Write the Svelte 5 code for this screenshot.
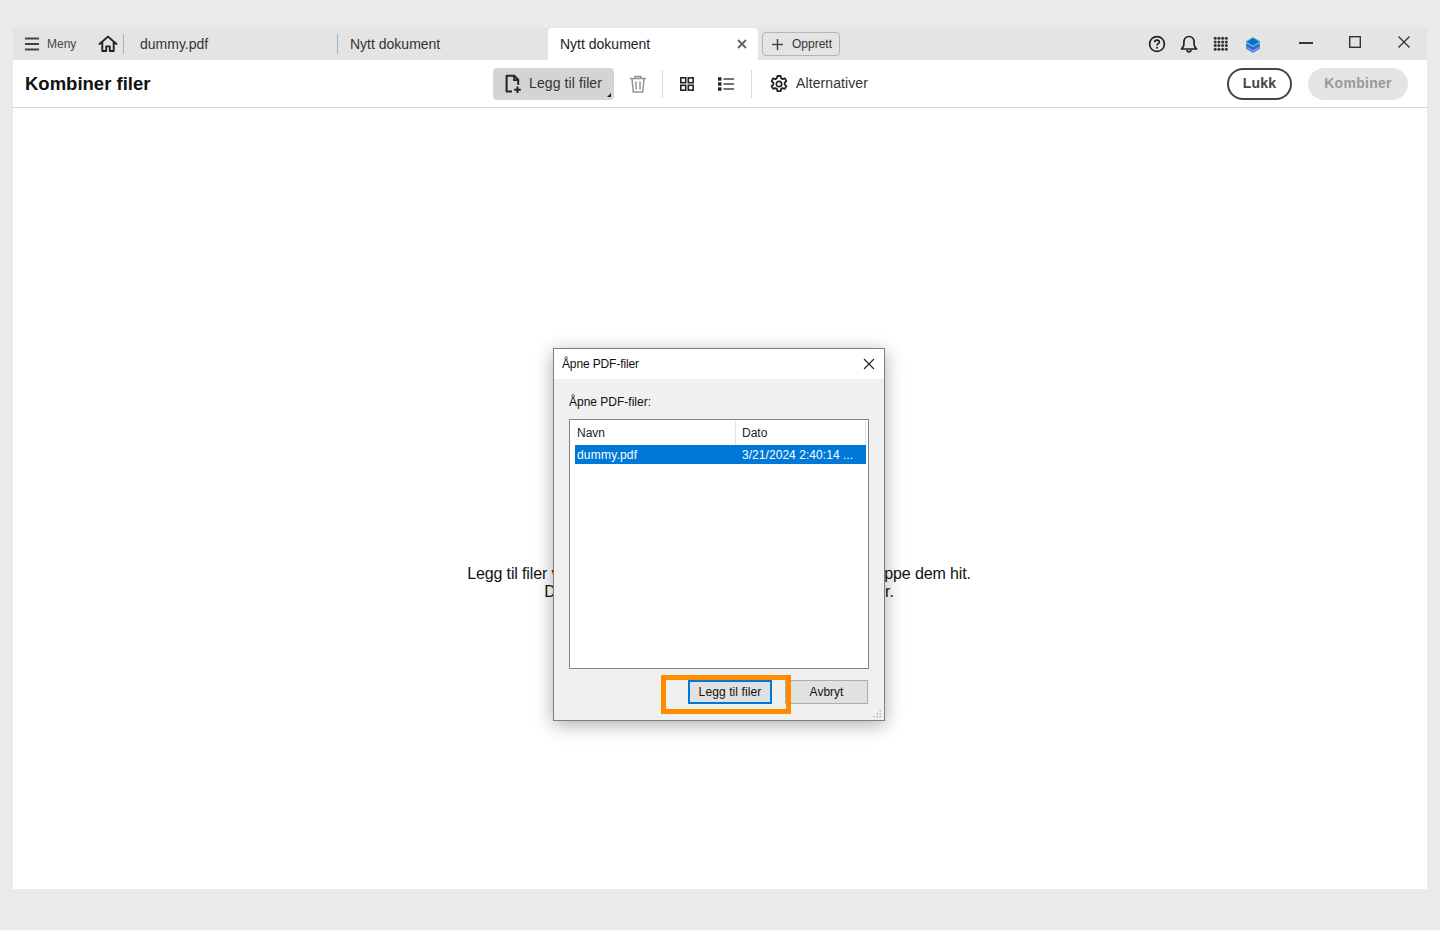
<script>
  const tabs = [
    { name: 'dummy.pdf', w: 214 },
    { name: 'Nytt dokument', w: 211 }
  ];
  const dots = [2.2, 5.9, 9.6, 13.3];
</script>

<div class="page">
  <div class="window">
    <header class="tabbar">
      <button class="menu">
        <svg width="16" height="14" viewBox="0 0 16 14"><path d="M1 1.500h14M1 7h14M1 12.500h14" stroke="#444" stroke-width="2" fill="none"/></svg>
        <span>Meny</span>
      </button>
      <button class="home" aria-label="Hjem">
        <svg width="20" height="18" viewBox="0 0 20 18"><path d="M1.500 9 10 1.600 18.500 9M4.300 7v9h3.900v-4.600h3.600V16h3.900V7" fill="none" stroke="#222" stroke-width="1.900" stroke-linejoin="round" stroke-linecap="round"/></svg>
      </button>
      {#each tabs as t}
        <div class="tab" style="width:{t.w}px">{t.name}</div>
      {/each}
      <div class="tab active">
        <span>Nytt dokument</span>
        <svg width="10" height="10" viewBox="0 0 10 10"><path d="M1 1l8 8M9 1l-8 8" stroke="#666" stroke-width="1.900"/></svg>
      </div>
      <button class="create">
        <svg width="11" height="11" viewBox="0 0 11 11"><path d="M5.500 0v11M0 5.500h11" stroke="#444" stroke-width="1.500"/></svg>
        <span>Opprett</span>
      </button>
      <div class="spacer"></div>
      <div class="status">
        <svg width="18" height="18" viewBox="0 0 18 18"><circle cx="9" cy="9" r="7.400" fill="none" stroke="#222" stroke-width="1.700"/><path d="M6.700 7.200c0-1.300 1-2 2.300-2s2.300.7 2.300 1.900c0 1.600-2.300 1.500-2.300 3.300" fill="none" stroke="#222" stroke-width="1.700"/><circle cx="9" cy="12.800" r="1" fill="#222"/></svg>
        <svg width="18" height="18" viewBox="0 0 18 18"><path d="M1.500 14h15c-1.600-1.300-2.400-2.600-2.400-4.700V7.200C14.100 4 12 1.500 9 1.500S3.900 4 3.900 7.200v2.100C3.900 11.400 3.100 12.700 1.500 14z" fill="none" stroke="#222" stroke-width="1.700" stroke-linejoin="round"/><path d="M6.800 15c.3 1.100 1.100 1.900 2.200 1.900s1.900-.8 2.200-1.900" fill="none" stroke="#222" stroke-width="1.700"/></svg>
        <svg class="dots" width="16" height="16" viewBox="0 0 16 16" fill="#333">
          {#each dots as y}
            {#each dots as x}
              <circle cx={x} cy={y} r="1.500"/>
            {/each}
          {/each}
        </svg>
        <svg class="logo" width="16" height="18" viewBox="0 0 16 18"><path d="M8 1l7 4v8l-7 4-7-4V5z" fill="#4fd0a0"/><path d="M8 2l6.500 3.800L8 9.500 1.500 5.800z" fill="#1266e0"/><path d="M1.500 7.500 8 11l6.500-3.500v5L8 16.500l-6.500-4z" fill="#2a62e8"/><path d="M2 11.500 8 15l6-3.500" fill="none" stroke="#8f8df0" stroke-width="1.500"/></svg>
      </div>
      <div class="winctl">
        <svg class="min" width="14" height="14" viewBox="0 0 14 14"><path d="M0 8h14" stroke="#222" stroke-width="1.800"/></svg>
        <svg width="12" height="12" viewBox="0 0 12 12"><rect x=".7" y=".7" width="10.600" height="10.600" fill="none" stroke="#333" stroke-width="1.400"/></svg>
        <svg width="12" height="12" viewBox="0 0 12 12"><path d="M.5.500l11 11M11.500.5l-11 11" stroke="#333" stroke-width="1.400"/></svg>
      </div>
    </header>

    <div class="toolbar">
      <h1>Kombiner filer</h1>
      <div class="tools">
        <button class="add">
          <svg width="20" height="20" viewBox="0 0 20 20"><path d="M9 17.500H3.600V1.800h7.600l4 4v5" fill="none" stroke="#222" stroke-width="2" stroke-linejoin="round"/><path d="M11 2v4.200h4.200" fill="none" stroke="#222" stroke-width="1.700"/><path d="M14.500 12.500v6.500M11.200 15.800h6.600" stroke="#222" stroke-width="2"/></svg>
          <span class="lbl">Legg til filer</span>
          <i class="corner"></i>
        </button>
        <svg class="trash" width="18" height="18" viewBox="0 0 18 18"><path d="M1 3.500h16M6 3.500V1.500h6v2M3 3.500l1.300 13.500h9.400L15 3.500M7 6.500v8M11 6.500v8" fill="none" stroke="#959595" stroke-width="1.500"/></svg>
        <div class="sep"></div>
        <svg class="grid" width="14" height="14" viewBox="0 0 14 14"><g fill="none" stroke="#222" stroke-width="1.600"><rect x=".8" y=".8" width="4.900" height="4.900"/><rect x="8.300" y=".8" width="4.900" height="4.900"/><rect x=".8" y="8.300" width="4.900" height="4.900"/><rect x="8.300" y="8.300" width="4.900" height="4.900"/></g></svg>
        <svg class="list" width="16" height="14" viewBox="0 0 16 14"><path d="M5.500 2h10.500M5.500 7h10.500M5.500 12h10.500" stroke="#444" stroke-width="1.600"/><g fill="#222"><rect x="0" y=".3" width="3.500" height="3.400"/><rect x="0" y="5.300" width="3.500" height="3.400"/><rect x="0" y="10.300" width="3.500" height="3.400"/></g></svg>
        <div class="sep s2"></div>
        <svg class="gear" width="18" height="18" viewBox="0 0 18 18"><path d="M7.400 1h3.200l.5 2.300 1.500.8 2.200-.8 1.600 2.800-1.700 1.600v1.800l1.700 1.600-1.600 2.800-2.200-.8-1.500.8-.5 2.300H7.400l-.5-2.300-1.500-.8-2.200.8-1.600-2.800 1.700-1.600V7.700L1.600 6.100l1.600-2.800 2.200.8 1.500-.8z" fill="none" stroke="#222" stroke-width="1.800" stroke-linejoin="round"/><circle cx="9" cy="9" r="2.700" fill="none" stroke="#222" stroke-width="1.700"/></svg>
        <span class="opt lbl">Alternativer</span>
      </div>
      <div class="actions">
        <button class="close">Lukk</button>
        <button class="combine">Kombiner</button>
      </div>
    </div>

    <main class="content">
      <p>Legg til filer ved å klikke på Legg til filer eller ved å dra og slippe dem hit.<br/>Du kan kombinere PDF-er og rapporter fra Kontor.</p>

      <section class="dialog">
        <div class="dtitle">
          <span>Åpne PDF-filer</span>
          <svg width="12" height="12" viewBox="0 0 12 12"><path d="M1 1l10 10M11 1L1 11" stroke="#222" stroke-width="1.100"/></svg>
        </div>
        <div class="dbody">
          <label for="files">Åpne PDF-filer:</label>
          <div class="listbox" id="files">
            <div class="head"><span class="c1">Navn</span><span class="c2">Dato</span></div>
            <div class="row"><span class="c1">dummy.pdf</span><span class="c2">3/21/2024 2:40:14 ...</span></div>
          </div>
          <div class="dbtns">
            <div class="hl">
              <button class="primary">Legg til filer</button>
            </div>
            <button class="cancel">Avbryt</button>
          </div>
        </div>
        <svg class="grip" width="9" height="9" viewBox="0 0 9 9" fill="#b4b4b4"><rect x="6.500" y="0" width="1.500" height="1.500"/><rect x="3.500" y="3" width="1.500" height="1.500"/><rect x="6.500" y="3" width="1.500" height="1.500"/><rect x="0.500" y="6" width="1.500" height="1.500"/><rect x="3.500" y="6" width="1.500" height="1.500"/><rect x="6.500" y="6" width="1.500" height="1.500"/></svg>
      </section>
    </main>
  </div>
</div>

<style>
  :global(body) {
    margin: 0;
    background: #eaeaea;
    font-family: "Liberation Sans", Arial, sans-serif;
  }
  button {
    font-family: inherit;
    border: 0;
    background: none;
    padding: 0;
  }
  .page {
    height: 930px;
    box-sizing: border-box;
    padding: 28px 13px 41px 13px;
  }
  .window {
    height: 861px;
    background: #fff;
    display: flex;
    flex-direction: column;
  }
  .tabbar {
    height: 32px;
    flex: none;
    background: #e4e4e4;
    display: flex;
    align-items: center;
    color: #333;
  }
  .menu {
    display: flex;
    align-items: center;
    gap: 7px;
    margin-left: 11px;
    width: 74px;
    font-size: 12px;
    color: #444;
  }
  .home {
    display: flex;
    margin-right: 5px;
    padding-bottom: 1px;
  }
  .tab {
    box-sizing: border-box;
    height: 20px;
    line-height: 20px;
    font-size: 14px;
    padding-left: 12px;
    border-left: 1px solid #b0b0b0;
    color: #333;
  }
  .tab:first-of-type { padding-left: 16px; }
  .tab.active {
    height: 32px;
    width: 210px;
    line-height: normal;
    background: #fff;
    border: 0;
    border-radius: 4px 4px 0 0;
    color: #222;
    display: flex;
    align-items: center;
    justify-content: space-between;
    padding: 0 11px 0 12px;
  }
  .create {
    display: flex;
    align-items: center;
    gap: 9px;
    box-sizing: border-box;
    width: 78px;
    height: 24px;
    margin-left: 4px;
    padding-left: 9px;
    border: 1px solid #b4b4b4;
    border-radius: 4px;
    font-size: 12px;
    color: #333;
  }
  .spacer { flex: 1; }
  .status {
    display: flex;
    align-items: center;
    gap: 14px;
    margin-right: 38px;
  }
  .dots { margin-left: 1px; }
  .logo { margin-top: 2px; margin-left: 2px; }
  .winctl {
    display: flex;
    align-items: center;
    gap: 37px;
    margin-right: 17px;
    padding-bottom: 4px;
  }
  .min { margin-right: -1px; }
  .toolbar {
    height: 48px;
    flex: none;
    box-sizing: border-box;
    border-bottom: 1px solid #d8d8d8;
    display: flex;
    align-items: center;
  }
  h1 {
    margin: 0 0 0 12px;
    font-size: 18.500px;
    font-weight: 700;
    color: #111;
    width: 468px;
    flex: none;
    white-space: nowrap;
  }
  .tools {
    display: flex;
    align-items: center;
    flex: 1;
    color: #333;
    font-size: 14px;
  }
  .lbl {
    letter-spacing: .1px;
    padding-bottom: 2px;
  }
  .add {
    position: relative;
    display: flex;
    align-items: center;
    gap: 6px;
    box-sizing: border-box;
    width: 121px;
    height: 32px;
    background: #d4d4d4;
    border-radius: 4px;
    padding-left: 10px;
    font-size: 14px;
    color: #333;
  }
  .corner {
    position: absolute;
    right: 3px;
    bottom: 3px;
    border-left: 4px solid transparent;
    border-bottom: 4px solid #222;
  }
  .trash { margin-left: 15px; }
  .sep {
    width: 1px;
    height: 28px;
    background: #d8d8d8;
    margin: 0 17px 0 15px;
  }
  .list { margin-left: 24px; }
  .s2 { margin: 0 18px 0 17px; }
  .opt { margin-left: 8px; }
  .actions {
    display: flex;
    gap: 16px;
    margin-right: 19px;
  }
  .close {
    box-sizing: border-box;
    width: 65px;
    height: 32px;
    border: 2px solid #444;
    border-radius: 16px;
    padding-bottom: 2px;
    font-size: 14px;
    font-weight: 700;
    color: #444;
    letter-spacing: .2px;
  }
  .combine {
    width: 100px;
    height: 32px;
    border-radius: 16px;
    background: #e4e4e4;
    padding-bottom: 2px;
    font-size: 14px;
    font-weight: 700;
    color: #999;
    letter-spacing: .3px;
  }
  .content {
    position: relative;
    flex: 1;
  }
  .content p {
    position: absolute;
    top: 457px;
    left: 0;
    right: 2px;
    margin: 0;
    text-align: center;
    font-size: 16px;
    line-height: 18px;
    color: #111;
    letter-spacing: -.13px;
  }
  .dialog {
    position: absolute;
    left: 540px;
    top: 240px;
    width: 332px;
    height: 373px;
    box-sizing: border-box;
    border: 1px solid #7f7f7f;
    background: #f0f0f0;
    box-shadow: 0 4px 18px rgba(0, 0, 0, .32);
    display: flex;
    flex-direction: column;
    font-size: 12px;
    color: #111;
  }
  .dtitle {
    height: 30px;
    flex: none;
    background: #fff;
    display: flex;
    align-items: center;
    justify-content: space-between;
    padding: 0 9px 0 8px;
    letter-spacing: -.13px;
  }
  .dbody {
    flex: 1;
    display: flex;
    flex-direction: column;
    padding: 16px 15px 0 15px;
  }
  label { height: 24px; line-height: 15px; }
  .listbox {
    box-sizing: border-box;
    height: 250px;
    flex: none;
    border: 1px solid #828282;
    background: #fff;
    padding: 0 2px 0 5px;
  }
  .head, .row {
    display: flex;
    align-items: center;
  }
  .head {
    height: 25px;
    padding-top: 1px;
    box-sizing: border-box;
    color: #222;
  }
  .c1 {
    box-sizing: border-box;
    width: 161px;
    padding-left: 2px;
    flex: none;
  }
  .head .c1 { border-right: 1px solid #e5e5e5; line-height: 24px; }
  .head .c2 { padding-left: 6px; flex: 1; line-height: 24px; border-right: 1px solid #e5e5e5; }
  .row {
    height: 19px;
    background: #0078d7;
    color: #fff;
  }
  .row .c1 { letter-spacing: .2px; }
  .row .c2 { padding-left: 6px; letter-spacing: .05px; }
  .dbtns {
    display: flex;
    justify-content: flex-end;
    align-items: flex-start;
    margin-top: 6px;
  }
  .hl {
    box-sizing: border-box;
    width: 130px;
    height: 39px;
    margin-right: -6px;
    border: 5px solid #ff8c00;
    position: relative;
    z-index: 1;
    padding-left: 22px;
  }
  .primary {
    display: block;
    box-sizing: border-box;
    width: 84px;
    height: 24px;
    border: 2px solid #0078d7;
    background: #e1e1e1;
    font-size: 12px;
    color: #111;
    letter-spacing: .1px;
  }
  .cancel {
    box-sizing: border-box;
    width: 83px;
    height: 24px;
    margin: 5px 1px 0 0;
    border: 1px solid #adadad;
    background: #e1e1e1;
    font-size: 12px;
    color: #111;
  }
  .grip {
    position: absolute;
    right: 2px;
    bottom: 1px;
  }
</style>
